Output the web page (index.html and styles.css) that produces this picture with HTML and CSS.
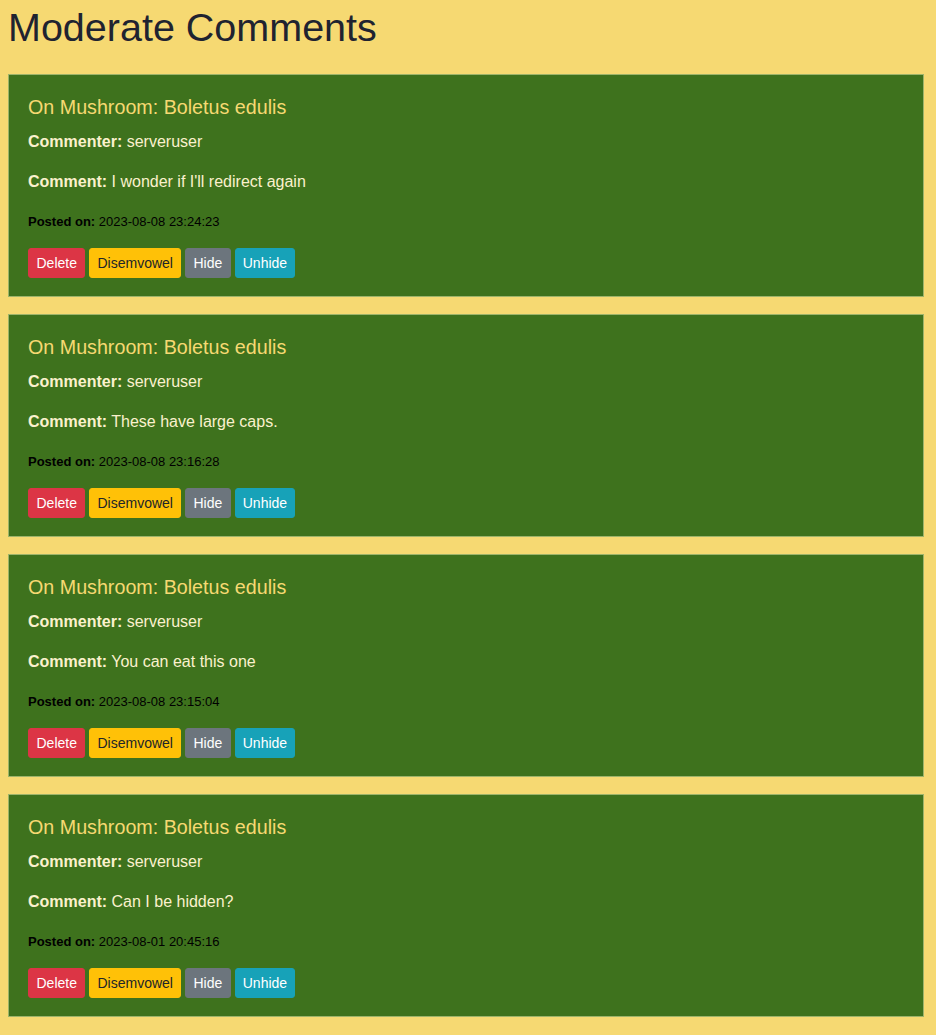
FILE: index.html
```html
<!DOCTYPE html>
<html>
<head>
<meta charset="utf-8">
<link rel="stylesheet" href="styles.css">
</head>
<body>
<h1 class="page-title">Moderate Comments</h1>
<div class="list">
  <div class="card">
    <h5 class="card-title">On Mushroom: Boletus edulis</h5>
    <p class="line"><b>Commenter:</b> serveruser</p>
    <p class="line"><b>Comment:</b> I wonder if I'll redirect again</p>
    <p class="posted"><b>Posted on:</b> 2023-08-08 23:24:23</p>
    <div class="actions"><button class="btn red">Delete</button><button class="btn yellow">Disemvowel</button><button class="btn grey">Hide</button><button class="btn teal">Unhide</button></div>
  </div>
  <div class="card">
    <h5 class="card-title">On Mushroom: Boletus edulis</h5>
    <p class="line"><b>Commenter:</b> serveruser</p>
    <p class="line"><b>Comment:</b> These have large caps.</p>
    <p class="posted"><b>Posted on:</b> 2023-08-08 23:16:28</p>
    <div class="actions"><button class="btn red">Delete</button><button class="btn yellow">Disemvowel</button><button class="btn grey">Hide</button><button class="btn teal">Unhide</button></div>
  </div>
  <div class="card">
    <h5 class="card-title">On Mushroom: Boletus edulis</h5>
    <p class="line"><b>Commenter:</b> serveruser</p>
    <p class="line"><b>Comment:</b> You can eat this one</p>
    <p class="posted"><b>Posted on:</b> 2023-08-08 23:15:04</p>
    <div class="actions"><button class="btn red">Delete</button><button class="btn yellow">Disemvowel</button><button class="btn grey">Hide</button><button class="btn teal">Unhide</button></div>
  </div>
  <div class="card">
    <h5 class="card-title">On Mushroom: Boletus edulis</h5>
    <p class="line"><b>Commenter:</b> serveruser</p>
    <p class="line"><b>Comment:</b> Can I be hidden?</p>
    <p class="posted"><b>Posted on:</b> 2023-08-01 20:45:16</p>
    <div class="actions"><button class="btn red">Delete</button><button class="btn yellow">Disemvowel</button><button class="btn grey">Hide</button><button class="btn teal">Unhide</button></div>
  </div>
</div>
</body>
</html>
```
FILE: styles.css
```css
html, body {
  margin: 0;
  background: #f6d972;
}
body {
  padding: 0 12px 0 8px;
  font-family: "Liberation Sans", Arial, sans-serif;
  color: #212529;
}
.page-title {
  font-size: 39.5px;
  font-weight: 400;
  line-height: 48px;
  margin: 3px 0 23px;
  color: #1f2330;
}
.list {
  display: flex;
  flex-direction: column;
  gap: 17px;
}
.card {
  background: #3e721d;
  border: 1px solid #9db46a;
  padding: 20px 19px 18px 19px;
  color: #fbf1cd;
}
.card-title {
  margin: 0 0 11px;
  font-size: 19.7px;
  font-weight: 400;
  line-height: 24px;
  color: #f6d972;
}
.line {
  margin: 0 0 16px;
  font-size: 16px;
  line-height: 24px;
}
.line + .line {
  margin-bottom: 18px;
}
.posted {
  margin: 0 0 17px;
  font-size: 13px;
  line-height: 19px;
  color: #000;
}
.actions {
  display: flex;
  gap: 4px;
}
.btn {
  font-family: "Liberation Sans", Arial, sans-serif;
  font-size: 14px;
  line-height: 20px;
  padding: 4px 7px;
  border: 1px solid transparent;
  border-radius: 3px;
  cursor: pointer;
}
.red { background: #dc3545; border-color: #dc3545; color: #fff; padding: 4px 7.5px; }
.yellow { background: #ffc107; border-color: #ffc107; color: #212529; }
.grey { background: #6c757d; border-color: #6c757d; color: #fff; padding: 4px 7.5px; }
.teal { background: #17a2b8; border-color: #17a2b8; color: #fff; }
```
